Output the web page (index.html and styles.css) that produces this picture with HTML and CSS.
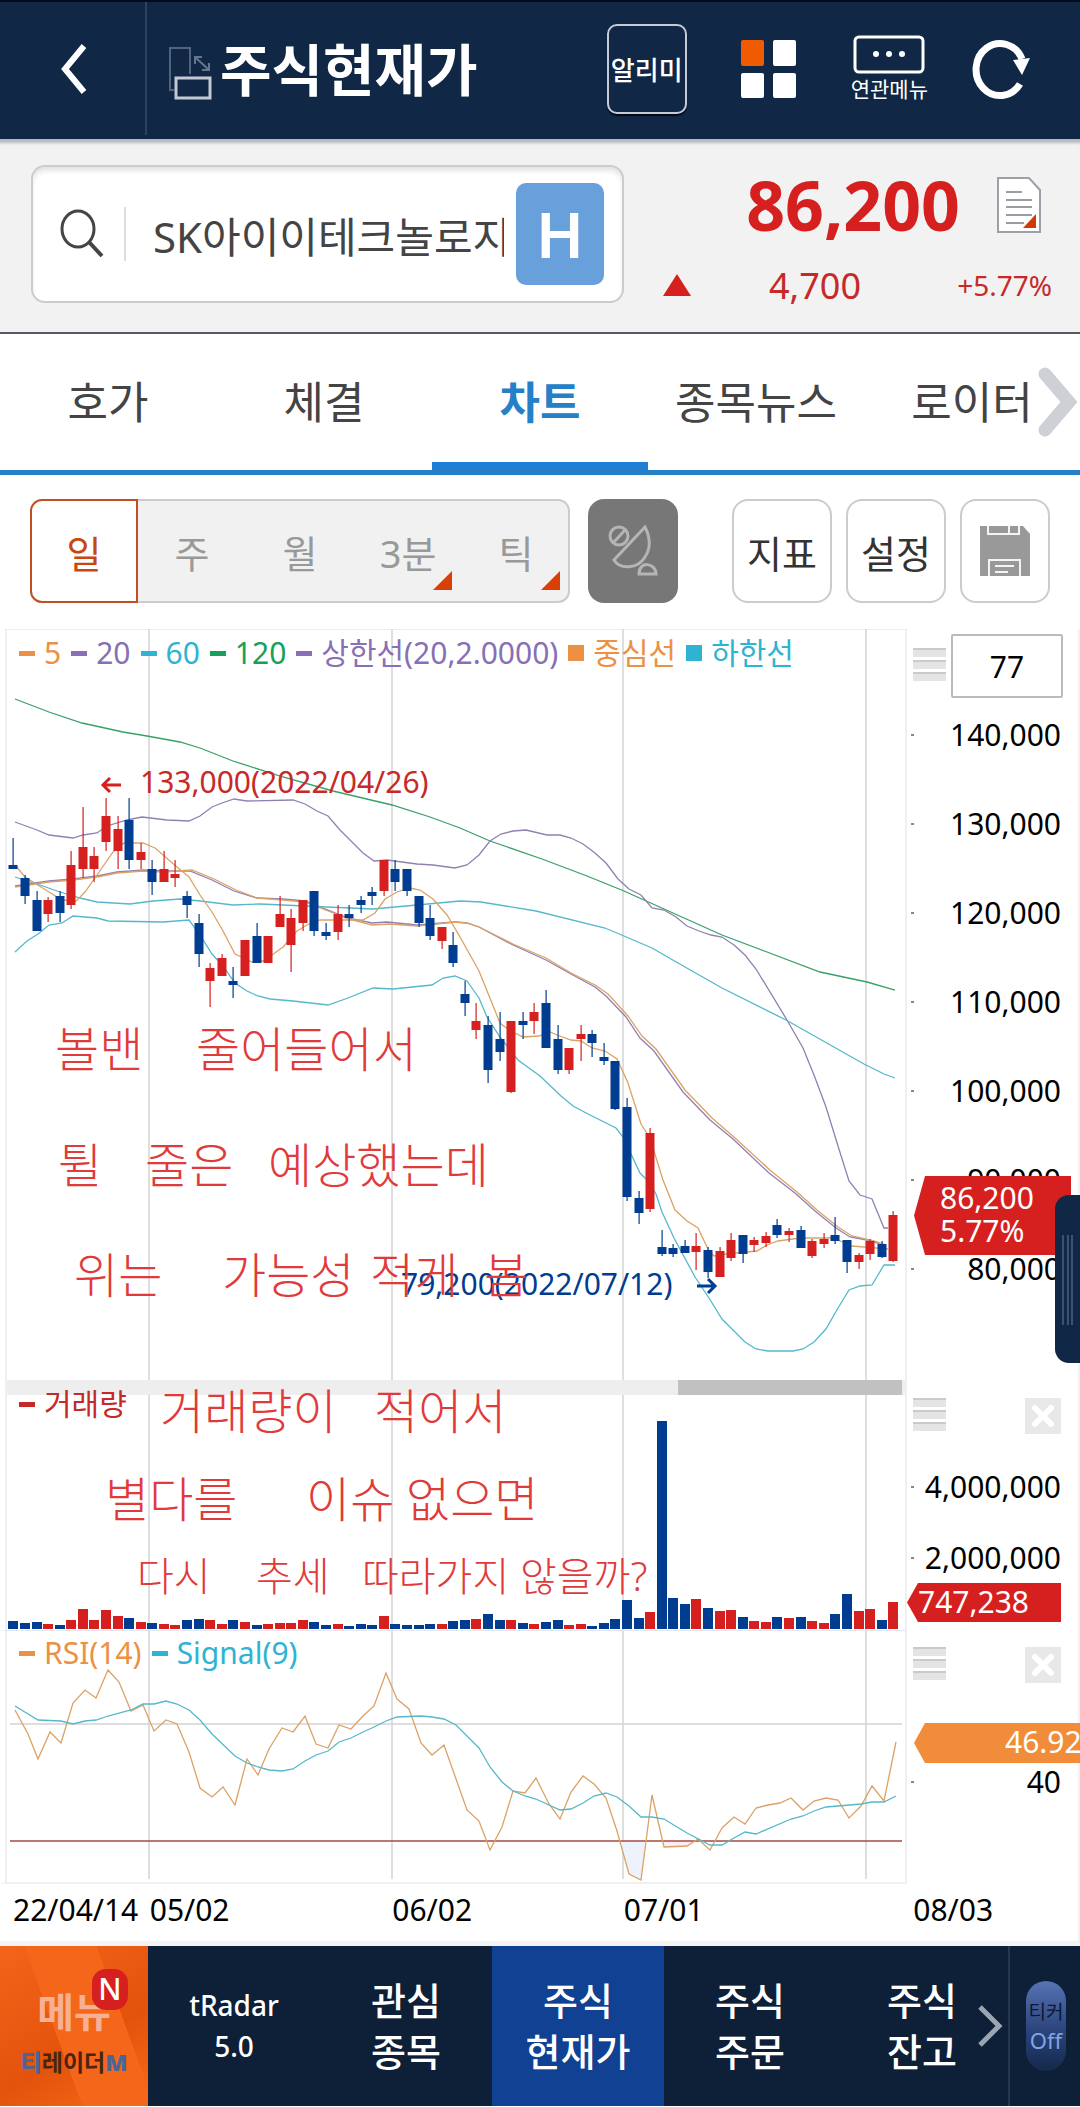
FILE: index.html
```html
<!DOCTYPE html>
<html lang="ko">
<head>
<meta charset="utf-8">
<meta name="viewport" content="width=device-width, initial-scale=1">
<title>주식현재가</title>
<link rel="stylesheet" href="styles.css">
</head>
<body>
<header class="topbar">
  <button class="back" aria-label="뒤로"><svg width="32" height="52" viewBox="0 0 32 52"><path d="M27 3 8 26 27 49" fill="none" stroke="#fff" stroke-width="6"/></svg></button>
  <svg class="rotate" width="44" height="54" viewBox="0 0 44 54" fill="none">
    <path d="M6 44H2V2h20v26" stroke="#53637b" stroke-width="2"/>
    <rect x="8" y="32" width="34" height="20" stroke="#c4cad3" stroke-width="3"/>
    <path d="M27 11 41 24M27 18v-7h7M41 17v7h-7" stroke="#66758b" stroke-width="2"/>
  </svg>
  <h1 class="title">주식현재가</h1>
  <button class="alert">알리미</button>
  <button class="plain" aria-label="전체"><svg width="56" height="60" viewBox="0 0 56 60"><rect y="1" width="23" height="26" rx="2" fill="#f05a00"/><g fill="#fff"><rect x="32" y="1" width="23" height="26" rx="2"/><rect y="34" width="23" height="25" rx="2"/><rect x="32" y="34" width="23" height="25" rx="2"/></g></svg></button>
  <button class="plain related"><svg width="72" height="40" viewBox="0 0 72 40"><rect x="2" y="2" width="68" height="35" rx="4" fill="none" stroke="#fff" stroke-width="3"/><g fill="#fff"><circle cx="23" cy="19" r="3"/><circle cx="36" cy="19" r="3"/><circle cx="49" cy="19" r="3"/></g></svg><span>연관메뉴</span></button>
  <button class="plain refresh" aria-label="새로고침"><svg width="60" height="62" viewBox="0 0 60 62"><path d="M48 46A24 26 0 1 1 50 21" fill="none" stroke="#fff" stroke-width="7"/><path d="M41 22 58 20 50 37z" fill="#fff"/></svg></button>
</header>

<section class="quote">
  <label class="search">
    <svg width="44" height="50" viewBox="0 0 44 50" fill="none" stroke="#444"><ellipse cx="18" cy="20" rx="16" ry="18" stroke-width="3"/><path d="M29 33 42 47" stroke-width="4"/></svg>
    <input type="text" value="SK아이이테크놀로지" aria-label="종목">
    <span class="history">H</span>
  </label>
  <div class="figures">
    <div class="price-row">
      <strong class="price">86,200</strong>
      <svg width="46" height="58" viewBox="0 0 46 58"><path d="M2 2h31l11 12v42H2z" fill="#fff" stroke="#9ca1a8" stroke-width="2"/><path d="M10 16h16M10 24h26M10 31h26M10 39h26M10 47h18" stroke="#9a9da1" stroke-width="2"/><path d="M40 38v14H27z" fill="#d03b05"/></svg>
    </div>
    <div class="change-row">
      <svg width="28" height="22" viewBox="0 0 28 22"><path d="M14 0 28 22H0z" fill="#d6201f"/></svg>
      <span class="change">4,700</span>
      <span class="rate">+5.77%</span>
    </div>
  </div>
</section>

<nav class="tabs">
  <a href="#">호가</a><a href="#">체결</a><a href="#" class="on">차트</a><a href="#">종목뉴스</a><a href="#">로이터</a>
  <button class="more" aria-label="다음"><svg width="44" height="76" viewBox="0 0 44 76"><path d="M9 10 33 38 9 66" fill="none" stroke="#cfd0d6" stroke-width="13" stroke-linecap="round"/></svg></button>
</nav>

<section class="tools">
  <div class="periods">
    <button class="on">일</button><button>주</button><button>월</button><button class="menu">3분</button><button class="menu">틱</button>
  </div>
  <button class="radar" aria-label="실시간"><svg width="50" height="54" viewBox="0 0 50 54" fill="none" stroke="#b5b5b5" stroke-width="3"><circle cx="11" cy="12" r="9"/><path d="M6 18 17 6M37 3 6 36c6 10 24 9 31-3 6-9 5-20 0-30zM31 50c0-14 17-11 17 0z"/></svg></button>
  <button class="tool">지표</button>
  <button class="tool">설정</button>
  <button class="tool save" aria-label="저장"><svg width="50" height="50" viewBox="0 0 50 50"><path d="M0 0h43l7 8v42H0z" fill="#999"/><path d="M8 0v8h31V0M29 0v8M9 50V34h31v16M15 40h19M15 46h13" fill="none" stroke="#f4f4f4" stroke-width="2"/></svg></button>
</section>

<main class="chart">
  <section class="panel price-panel">
    <div class="plot">
      <svg class="canvas" viewBox="0 629 907 751" preserveAspectRatio="none">
        <path class="grid" d="M149 629V1380M392 629V1380M623 629V1380M866 629V1380"/>
        <g class="lines">
          <polyline class="c-green" points="15,699 49,712 82,723 123,732 147,736 180,742 200,748 233,761 283,777 333,791 392,805 430,817 460,828 490,841 542,859 587,876 624,891 664,909 722,935 767,952 820,972 867,982 895,990"/>
          <polyline class="c-purple" points="15,822 37,830 49,835 73,838 83,835 97,833 107,826 127,820 142,817 167,820 189,821 200,816 212,807 222,803 234,799 247,801 293,800 305,804 317,811 328,816 340,830 363,853 374,861 387,860 417,864 433,865 455,868 467,865 479,855 490,841 501,834 513,831 526,830 547,835 560,835 571,838 583,844 595,853 606,863 618,879 629,889 641,895 652,908 664,910 676,917 687,926 699,931 711,935 722,937 734,945 745,955 756,969 787,1020 803,1048 814,1075 826,1107 838,1146 849,1181 860,1195 872,1199 884,1228 888,1228"/>
          <polyline class="c-purple" points="15,886 49,881 73,879 97,876 117,872 143,870 163,871 190,871 212,880 234,891 257,898 283,899 305,901 328,910 348,918 372,923 387,922 417,925 455,922 467,923 479,927 513,945 546,960 571,974 595,987 606,996 626,1017 640,1038 654,1051 683,1092 710,1120 733,1139 769,1173 795,1193 815,1211 836,1228 850,1237 872,1241 884,1246"/>
          <polyline class="c-orange" points="15,887 49,882 73,880 97,877 117,873 143,871 163,872 192,870 214,879 236,890 257,898 283,900 305,902 328,911 348,919 372,925 390,924 417,926 455,922 467,923 479,927 513,944 546,958 571,973 595,985 608,994 628,1016 642,1036 656,1049 685,1090 712,1118 735,1138 771,1171 797,1192 817,1210 838,1227 852,1236 874,1241 886,1245"/>
          <polyline class="c-cyan" points="15,877 37,884 60,892 80,898 97,902 130,904 153,901 180,899 200,901 233,905 260,904 327,907 373,909 417,905 460,901 481,902 536,911 605,928 624,936 652,948 685,967 722,988 786,1020 864,1064 884,1074 895,1078"/>
          <polyline class="c-orange" points="15,865 25,877 49,892 62,900 76,901 85,892 97,875 113,852 124,843 143,843 155,848 177,867 189,877 200,895 212,912 223,931 235,954 244,958 252,962 263,961 272,955 283,947 297,931 307,925 320,920 363,920 375,913 385,899 397,892 410,888 420,890 433,899 447,915 460,937 479,971 500,1023 509,1030 523,1037 539,1036 550,1032 557,1035 571,1040 581,1041 592,1048 605,1051 617,1059 628,1083 641,1124 650,1138 663,1180 675,1210 687,1221 698,1228 709,1251 714,1256 726,1254 747,1252 757,1251 767,1245 778,1241 800,1238 833,1238 852,1246 876,1248 888,1249"/>
          <polyline class="c-cyan" points="15,952 27,941 38,934 49,925 62,923 73,916 97,918 108,921 163,922 189,920 200,935 212,954 223,966 235,983 247,991 258,996 270,999 293,1001 328,1005 348,998 373,988 393,989 432,985 443,978 455,976 467,981 479,998 487,1017 500,1037 518,1060 540,1076 561,1096 573,1106 588,1114 616,1128 623,1137 640,1173 647,1180 656,1194 662,1212 674,1238 695,1277 709,1298 722,1319 745,1342 756,1349 768,1351 793,1351 803,1349 814,1342 826,1329 838,1308 849,1290 860,1286 872,1285 884,1265 895,1265"/>
        </g>
        <g id="candles"></g>
        <g fill="none" stroke-width="3"><path d="M121 785H104M110 778l-7 7 7 7" stroke="#d6201f"/><path d="M697 1286h17M708 1279l7 7-7 7" stroke="#003c8f"/></g>
      </svg>
      <ul class="legend">
        <li class="orange">5</li><li class="purple">20</li><li class="cyan">60</li><li class="green">120</li><li class="purple">상한선(20,2.0000)</li><li class="orange box">중심선</li><li class="cyan box">하한선</li>
      </ul>
      <span class="mark high">133,000(2022/04/26)</span>
      <span class="mark low">79,200(2022/07/12)</span>
    </div>
    <div class="axis">
      <div class="axis-head"><i class="grip"></i><input class="count" type="text" value="77" aria-label="봉 개수"></div>
      <ul class="scale"><li>140,000</li><li>130,000</li><li>120,000</li><li>110,000</li><li>100,000</li><li>90,000</li><li>80,000</li></ul>
      <div class="tag now">86,200<br>5.77%</div>
    </div>
  </section>

  <section class="panel volume-panel">
    <div class="plot">
      <div class="scroll"><div class="thumb"></div></div>
      <svg class="canvas" viewBox="0 1395 907 235" preserveAspectRatio="none">
        <path class="grid" d="M149 1395V1630M392 1395V1630M623 1395V1630M866 1395V1630"/>
        <g id="volumes"></g>
      </svg>
      <ul class="legend"><li class="red">거래량</li></ul>
    </div>
    <div class="axis">
      <div class="axis-head"><i class="grip"></i><button class="close" aria-label="닫기"><svg width="36" height="36" viewBox="0 0 36 36"><path d="M10 10 26 26M26 10 10 26" stroke="#fff" stroke-width="6" stroke-linecap="round"/></svg></button></div>
      <ul class="scale"><li>4,000,000</li><li>2,000,000</li></ul>
      <div class="tag vol">747,238</div>
    </div>
  </section>

  <section class="panel rsi-panel">
    <div class="plot">
      <svg class="canvas" viewBox="0 1632 907 251" preserveAspectRatio="none">
        <path class="grid" d="M149 1632V1880M392 1632V1880M623 1632V1880M866 1632V1880M10 1725H902"/>
        <path d="M621 1842 629 1875 641 1881 645 1842z" fill="#edf2fd"/>
        <path d="M663 1842 664 1848 687 1847 697 1842z" fill="#f8eef4"/>
        <path d="M10 1842H902" stroke="#a34a46" stroke-width="1.5"/>
        <g class="lines">
          <polyline class="c-orange" points="15,1711 28,1735 38,1760 50,1733 61,1744 73,1704 85,1691 96,1699 108,1671 119,1683 131,1712 143,1706 154,1732 166,1721 177,1725 189,1753 200,1789 212,1798 223,1788 235,1806 247,1760 258,1776 269,1750 282,1729 293,1733 305,1717 316,1745 328,1749 339,1726 351,1730 363,1717 374,1707 386,1674 397,1700 409,1710 421,1744 432,1756 444,1746 456,1780 467,1811 479,1822 490,1851 502,1828 513,1792 525,1794 536,1779 549,1805 560,1820 571,1793 583,1777 594,1785 606,1799 617,1832 629,1875 641,1881 652,1796 664,1848 687,1847 698,1840 710,1851 722,1829 734,1818 745,1825 756,1809 768,1806 780,1804 791,1799 803,1811 814,1802 826,1799 838,1801 849,1819 861,1807 872,1787 884,1802 896,1743"/>
          <polyline class="c-cyan" points="15,1707 38,1721 61,1722 73,1725 85,1722 96,1721 108,1717 131,1711 143,1705 154,1705 166,1702 177,1705 189,1711 200,1721 212,1735 235,1757 247,1764 258,1768 269,1771 282,1772 293,1770 305,1762 316,1756 328,1752 339,1743 351,1739 363,1733 374,1728 386,1722 397,1718 421,1717 432,1718 444,1720 456,1726 479,1749 490,1768 502,1783 513,1792 525,1797 536,1800 560,1811 571,1810 583,1804 594,1797 606,1794 617,1798 629,1807 641,1818 652,1818 664,1820 687,1834 710,1846 722,1846 734,1839 745,1833 756,1835 791,1820 803,1817 814,1812 826,1808 838,1807 861,1805 872,1803 884,1803 896,1797"/>
        </g>
      </svg>
      <ul class="legend"><li class="orange">RSI(14)</li><li class="cyan">Signal(9)</li></ul>
    </div>
    <div class="axis">
      <div class="axis-head"><i class="grip"></i><button class="close" aria-label="닫기"><svg width="36" height="36" viewBox="0 0 36 36"><path d="M10 10 26 26M26 10 10 26" stroke="#fff" stroke-width="6" stroke-linecap="round"/></svg></button></div>
      <ul class="scale"><li>40</li></ul>
      <div class="tag rsi">46.92</div>
    </div>
  </section>

  <div class="dates"><span>22/04/14</span><span>05/02</span><span>06/02</span><span>07/01</span><span>08/03</span></div>

  <svg class="memo">
    <g class="large">
      <text x="55" y="438">볼밴</text><text x="196" y="438">줄어들어서</text>
      <text x="58" y="554">튈</text><text x="145" y="554">줄은</text><text x="268" y="554">예상했는데</text>
      <text x="74" y="664">위는</text><text x="222" y="664">가능성</text><text x="370" y="664">적게</text><text x="484" y="664">봄</text>
      <text x="160" y="800">거래량이</text><text x="374" y="800">적어서</text>
      <text x="105" y="888">별다를</text><text x="306" y="888">이슈</text><text x="406" y="888">없으면</text>
    </g>
    <g class="small">
      <text x="137" y="962">다시</text><text x="256" y="962">추세</text><text x="362" y="962">따라가지</text><text x="520" y="962">않을까?</text>
    </g>
  </svg>
  <button class="drawer" aria-label="서랍 열기"></button>
</main>

<nav class="bottom">
  <a href="#" class="home"><span class="home-text">메뉴</span><span class="new">N</span><span class="brand"><b>티</b>레이더<b>M</b></span></a>
  <a href="#" class="item latin">tRadar<br>5.0</a>
  <a href="#" class="item">관심<br>종목</a>
  <a href="#" class="item on">주식<br>현재가</a>
  <a href="#" class="item">주식<br>주문</a>
  <a href="#" class="item">주식<br>잔고</a>
  <button class="next" aria-label="다음"><svg width="28" height="44" viewBox="0 0 28 44"><path d="M4 3 23 22 4 41" fill="none" stroke="#9ba5b2" stroke-width="5"/></svg></button>
  <div class="ticker"><button><span>티커</span><span class="off">Off</span></button></div>
</nav>
<script src="chart.js"></script>
</body>
</html>
```

FILE: styles.css
```css
* { box-sizing: border-box; }
body {
  margin: 0;
  background: #fff;
  color: #000;
  font-family: "Noto Sans", "Noto Sans CJK KR", sans-serif;
  font-size: 30px;
}
button, input { font: inherit; color: inherit; border: 0; background: none; padding: 0; margin: 0; }
a { color: inherit; text-decoration: none; }
ul { list-style: none; margin: 0; padding: 0; }
svg { display: block; flex: none; }

/* top bar */
.topbar {
  display: flex;
  align-items: center;
  height: 139px;
  padding: 0 48px 4px 0;
  background: #102846;
  border-top: 2px solid #030b1c;
  color: #fff;
}
.back {
  display: flex;
  align-items: center;
  justify-content: center;
  align-self: stretch;
  width: 147px;
  border-right: 2px solid #2d425f;
}
.rotate { margin: 8px 8px 0 21px; }
.title { margin: 0 auto 0 0; font-size: 56px; line-height: 80px; font-weight: 700; }
.alert {
  width: 80px;
  height: 90px;
  border: 2px solid #c6ccd5;
  border-radius: 10px;
  box-shadow: 0 2px 1px #020a18;
  font-size: 26px;
  font-weight: 500;
}
.plain { margin-left: 54px; }
.related { display: flex; flex-direction: column; align-items: center; font-size: 21px; line-height: 28px; }
.refresh { margin-left: 44px; }

/* quote */
.quote {
  display: flex;
  height: 195px;
  padding: 26px 28px 0 31px;
  background: #f2f2f2;
  border-bottom: 2px solid #575862;
  box-shadow: inset 0 6px 3px -2px #b6b9be;
}
.search {
  display: flex;
  align-items: center;
  flex: 1;
  min-width: 0;
  height: 138px;
  padding: 0 18px 0 27px;
  background: #fff;
  border: 2px solid #ccc;
  border-radius: 14px;
  box-shadow: inset 0 5px 6px -2px #ddd;
}
.search input {
  flex: 1;
  min-width: 0;
  height: 54px;
  margin: 0 12px 0 20px;
  padding-left: 27px;
  border-left: 2px solid #ddd;
  color: #444;
  font-size: 42px;
}
.history {
  width: 88px;
  height: 102px;
  border-radius: 10px;
  background: #67a0db;
  color: #fff;
  font-size: 64px;
  line-height: 102px;
  font-weight: 600;
  text-align: center;
}
.figures { width: 428px; padding-left: 8px; color: #d6201f; }
.price-row { display: flex; align-items: center; justify-content: flex-end; gap: 36px; height: 80px; padding-right: 10px; }
.price { font-size: 68px; line-height: 80px; font-weight: 700; }
.change-row { display: flex; align-items: center; height: 80px; padding-left: 31px; color: #c62a28; }
.change { width: 170px; font-size: 36px; text-align: right; }
.rate { flex: 1; font-size: 28px; text-align: right; }

/* tabs */
.tabs { position: relative; display: grid; grid-template-columns: repeat(5, 1fr); height: 141px; border-bottom: 5px solid #2580c8; }
.tabs a { text-align: center; font-size: 44px; line-height: 136px; color: #444; }
.tabs .on { color: #2580c8; font-weight: 700; box-shadow: inset 0 -8px #1f7fd4; }
.more { position: absolute; right: 0; top: 30px; }

/* chart tools */
.tools { display: flex; height: 154px; padding: 24px 30px 26px; font-size: 38px; color: #333; }
.periods { display: grid; grid-template-columns: repeat(5, 1fr); flex: 1; margin-right: 18px; background: #f1f1f1; border-radius: 12px; box-shadow: inset 0 0 0 2px #ccc; color: #999; }
.periods button { position: relative; }
.periods .on { background: #fff; border: 2px solid #c0501f; border-radius: 12px 0 0 12px; color: #c9460f; }
.periods .menu::after { content: ""; position: absolute; right: 10px; bottom: 13px; border-bottom: 19px solid #d93f06; border-left: 19px solid transparent; }
.radar, .tool { display: flex; align-items: center; justify-content: center; border-radius: 16px; }
.radar { width: 90px; margin-right: 54px; background: #777; }
.tool { width: 100px; margin-right: 14px; border: 2px solid #ccc; }
.tool.save { width: 90px; margin-right: 0; }

/* chart */
.chart { position: relative; border-right: 2px solid #f2f2f2; }
.panel { display: grid; grid-template-columns: minmax(0, 1fr) 171px; }
.plot { position: relative; min-width: 0; border-right: 2px solid #f0f0f0; border-left: 5px solid transparent; }
.plot::before { content: ""; position: absolute; left: 0; top: 0; bottom: 0; width: 2px; background: #f0f0f0; }
.canvas { width: calc(100% + 7px); margin: 0 -2px 0 -5px; }
.price-panel .canvas { height: 751px; }
.volume-panel .canvas { height: 235px; }
.rsi-panel .canvas { height: 251px; }
.price-panel .plot { box-shadow: inset 0 1px #eee; }
.rsi-panel .plot { border-top: 1px solid #e4e8ee; border-bottom: 2px solid #f0f0f0; }
.grid { fill: none; stroke: #d4d4d4; stroke-width: 1.5; }
.lines { fill: none; stroke-width: 1.3; }
.c-green { stroke: #38a068; }
.c-purple { stroke: #9180b0; }
.c-orange { stroke: #dba266; }
.c-cyan { stroke: #55b8cb; }
.up { fill: #d6201f; }
.down { fill: #003c8f; }

.legend { position: absolute; left: 14px; top: 2px; display: flex; gap: 10px; line-height: 44px; white-space: nowrap; }
.rsi-panel .legend { top: 0; }
.legend li { display: flex; align-items: center; gap: 9px; }
.legend li::before { content: ""; width: 16px; height: 5px; background: currentColor; }
.legend .box::before { height: 16px; }
.orange { color: #ec9144; }
.purple { color: #8770b5; }
.cyan { color: #2fb3d2; }
.green { color: #17a05a; }
.red { color: #c62a28; }

.mark { position: absolute; line-height: 44px; white-space: nowrap; }
.high { left: 15%; top: 131px; color: #c62a28; }
.low { left: 44%; top: 633px; color: #003c8f; }

.axis { position: relative; }
.axis-head { display: flex; justify-content: space-between; align-items: flex-start; height: 61px; padding: 5px 15px 0 6px; }
.volume-panel .axis-head { height: 71px; padding: 18px 17px 0 6px; }
.rsi-panel .axis-head { height: 116px; padding: 17px 17px 0 6px; }
.grip { width: 33px; height: 34px; background: repeating-linear-gradient(#c8cacc 0 2px, #e4e4e4 2px 9px, transparent 9px 12px); }
.price-panel .grip { margin-top: 14px; }
.count { width: 112px; height: 64px; border: 2px solid #bbb; border-radius: 2px; text-align: center; }
.close { width: 36px; height: 36px; background: #e8e8e8; }
.scale li { display: flex; align-items: center; justify-content: space-between; line-height: 89px; padding: 0 17px 0 4px; }
.scale li::before { content: ""; width: 3px; height: 2px; background: #888; }
.volume-panel .scale li, .rsi-panel .scale li { line-height: 71px; }
.tag { position: absolute; left: 7px; color: #fff; background: #d6201f; line-height: 33px; padding-left: 26px; }
.now { top: 547px; width: 157px; height: 79px; padding-top: 5px; clip-path: polygon(11px 0, 100% 0, 100% 100%, 11px 100%, 0 50%); }
.vol { left: 0; top: 203px; width: 154px; height: 39px; padding: 2px 0 0 11px; clip-path: polygon(11px 0, 100% 0, 100% 100%, 11px 100%, 0 50%); }
.rsi { top: 93px; width: 166px; height: 40px; padding: 2px 0 0 91px; overflow: hidden; background: #f08c3a; clip-path: polygon(11px 0, 100% 0, 100% 100%, 11px 100%, 0 50%); }

.scroll { height: 15px; padding-right: 3px; background: #eee; }
.thumb { width: 25%; height: 15px; margin-left: auto; background: #c1c1c1; }
.dates { display: grid; grid-template-columns: 137fr 243fr 232fr 290fr 165fr; padding-left: 13px; height: 62px; line-height: 52px; border-bottom: 5px solid #f4f4f4; white-space: nowrap; }

.memo { position: absolute; left: 0; top: 0; width: 100%; height: 100%; fill: #e03a3a; font-weight: 300; pointer-events: none; }
.large { font-size: 48px; }
.small { font-size: 40px; }
.drawer {
  position: absolute;
  right: -2px;
  top: 566px;
  width: 25px;
  height: 168px;
  border-radius: 14px 0 0 14px;
  background: linear-gradient(90deg, transparent 7px, #3d5271 7px 9px, transparent 9px 12px, #3d5271 12px 14px, transparent 14px 16px, #3d5271 16px 18px, transparent 18px) 0 40px / 100% 90px no-repeat #102846;
}

/* bottom navigation */
.bottom { display: grid; grid-template-columns: 148px repeat(5, 1fr) 72px; position: relative; height: 160px; background: #0d2038; color: #fff; }
.item { display: flex; align-items: center; justify-content: center; text-align: center; font-size: 38px; line-height: 51px; font-weight: 500; }
.item.on { background: #104193; }
.latin { font-size: 28px; line-height: 41px; }
.home {
  position: relative;
  display: flex;
  flex-direction: column;
  align-items: center;
  padding-top: 40px;
  background: linear-gradient(70deg, transparent 40%, #f4661a 40% 75%, transparent 75%), linear-gradient(150deg, #f4641a, #e3530c 60%, #f86a18);
}
.home-text { font-size: 40px; line-height: 52px; font-weight: 700; color: #f8b094; }
.new { position: absolute; left: 92px; top: 23px; width: 36px; height: 41px; border-radius: 14px; background: #d6201f; font-size: 30px; line-height: 40px; font-weight: 500; text-align: center; }
.brand { font-size: 23px; line-height: 48px; font-weight: 700; color: #4a2410; }
.brand b { color: #4c6594; }
.next { position: absolute; right: 76px; top: 58px; }
.ticker { display: flex; align-items: center; justify-content: center; border-left: 2px solid #26374f; padding-left: 2px; }
.ticker button { width: 40px; height: 90px; border-radius: 20px; background: linear-gradient(#5673b3, #2b447c 55%, #14294a); font-size: 19px; line-height: 28px; color: #0c1730; }
.ticker span { display: block; }
.ticker .off { font-size: 22px; color: #7fa5e6; }
```

FILE: chart.js
```js
// One row per trading day: high, body top, body bottom, low, rising (1) or falling (0), volume height
const days = [
  [838,865,869,869,0,8],[875,878,896,904,0,6],[891,900,931,931,0,7],[897,900,914,922,1,5],
  [891,896,913,922,0,4],[851,865,905,909,1,9],[807,847,869,878,1,20],[847,856,869,882,1,9],
  [798,816,842,851,1,19],[816,829,851,869,1,13],[798,820,860,869,0,11],[843,852,860,869,1,7],
  [860,869,882,895,0,6],[851,869,882,882,1,5],[860,874,878,887,1,4],[891,896,905,918,0,9],
  [914,923,954,967,0,10],[963,968,981,1007,1,9],[954,958,976,976,1,5],[967,981,985,998,0,9],
  [940,940,976,976,1,7],[923,936,963,963,0,4],[936,936,963,963,1,5],[896,914,927,927,1,6],
  [909,918,945,972,1,6],[900,900,923,931,1,9],[891,891,931,936,0,7],[923,932,936,940,0,4],
  [905,914,932,940,1,5],[905,914,918,927,0,3],[896,900,905,913,0,5],[887,892,896,905,0,4],
  [860,860,891,896,1,13],[860,869,882,891,0,5],[869,869,891,896,0,4],[896,896,923,927,0,4],
  [905,918,936,940,0,5],[927,927,941,949,1,5],[932,945,963,967,0,8],[981,994,1003,1016,0,9],
  [1003,1021,1030,1039,1,10],[1016,1025,1070,1083,0,15],[1012,1039,1052,1061,0,9],[1021,1021,1092,1093,1,9],
  [1012,1021,1025,1039,0,6],[1003,1012,1021,1034,1,5],[990,1003,1048,1048,0,7],[1025,1039,1070,1074,0,9],
  [1048,1048,1070,1074,1,4],[1025,1034,1039,1061,1,5],[1030,1034,1043,1057,0,3],[1043,1057,1061,1065,0,6],
  [1061,1061,1109,1110,0,10],[1098,1107,1197,1201,0,29],[1191,1198,1213,1224,0,11],[1128,1133,1209,1212,1,17],
  [1230,1247,1254,1256,0,208],[1244,1248,1254,1257,0,31],[1240,1246,1253,1253,0,25],[1233,1246,1252,1270,1,30],
  [1247,1250,1272,1278,0,21],[1247,1251,1277,1277,1,18],[1233,1240,1258,1261,1,19],[1235,1235,1254,1263,0,12],
  [1237,1240,1245,1252,1,8],[1232,1236,1243,1247,1,7],[1219,1225,1235,1238,0,12],[1228,1231,1235,1242,1,11],
  [1226,1230,1248,1248,0,12],[1239,1241,1256,1258,1,8],[1233,1239,1244,1248,1,6],[1217,1235,1241,1244,0,15],
  [1240,1240,1262,1273,0,35],[1253,1255,1262,1269,1,18],[1239,1241,1254,1260,1,20],[1241,1244,1257,1258,0,9],
  [1211,1215,1261,1262,1,27]
];
const step = 11.577;
const base = 1629;
const rect = (x, y, w, h) => `<rect x="${x}" y="${y}" width="${w}" height="${h}"/>`;
let candles = "";
let volumes = "";
days.forEach(([high, top, bottom, low, rising, volume], i) => {
  const x = Math.round(13.4 + step * i);
  const tone = rising ? "up" : "down";
  candles += `<g class="${tone}">${rect(x - 0.5, high, 1.2, low - high)}${rect(x - 4.5, top, 9, bottom - top)}</g>`;
  volumes += `<g class="${tone}">${rect(x - 5, base - volume, 10, volume)}</g>`;
});
document.getElementById("candles").innerHTML = candles;
document.getElementById("volumes").innerHTML = volumes;
```
